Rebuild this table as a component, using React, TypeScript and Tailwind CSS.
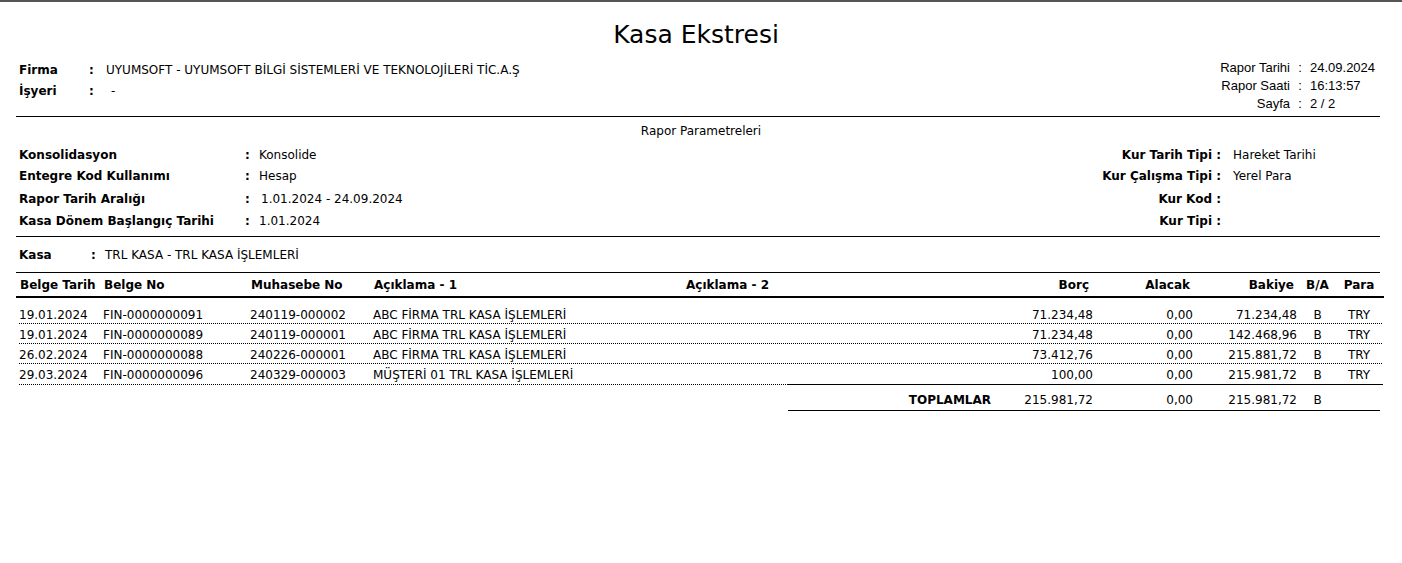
import React from "react";

type Row = {
  tarih: string;
  belgeNo: string;
  muhasebeNo: string;
  aciklama1: string;
  aciklama2: string;
  borc: string;
  alacak: string;
  bakiye: string;
  ba: string;
  para: string;
};

const rows: Row[] = [
  {
    tarih: "19.01.2024",
    belgeNo: "FIN-0000000091",
    muhasebeNo: "240119-000002",
    aciklama1: "ABC FİRMA TRL KASA İŞLEMLERİ",
    aciklama2: "",
    borc: "71.234,48",
    alacak: "0,00",
    bakiye: "71.234,48",
    ba: "B",
    para: "TRY",
  },
  {
    tarih: "19.01.2024",
    belgeNo: "FIN-0000000089",
    muhasebeNo: "240119-000001",
    aciklama1: "ABC FİRMA TRL KASA İŞLEMLERİ",
    aciklama2: "",
    borc: "71.234,48",
    alacak: "0,00",
    bakiye: "142.468,96",
    ba: "B",
    para: "TRY",
  },
  {
    tarih: "26.02.2024",
    belgeNo: "FIN-0000000088",
    muhasebeNo: "240226-000001",
    aciklama1: "ABC FİRMA TRL KASA İŞLEMLERİ",
    aciklama2: "",
    borc: "73.412,76",
    alacak: "0,00",
    bakiye: "215.881,72",
    ba: "B",
    para: "TRY",
  },
  {
    tarih: "29.03.2024",
    belgeNo: "FIN-0000000096",
    muhasebeNo: "240329-000003",
    aciklama1: "MÜŞTERİ 01 TRL KASA İŞLEMLERİ",
    aciklama2: "",
    borc: "100,00",
    alacak: "0,00",
    bakiye: "215.981,72",
    ba: "B",
    para: "TRY",
  },
];

const leftParams = [
  { label: "Konsolidasyon", value: "Konsolide", h: "h-[20px]", pad: "" },
  { label: "Entegre Kod Kullanımı", value: "Hesap", h: "h-[22px]", pad: "" },
  { label: "Rapor Tarih Aralığı", value: "1.01.2024 - 24.09.2024", h: "h-[23px]", pad: "pl-[2px]" },
  { label: "Kasa Dönem Başlangıç Tarihi", value: "1.01.2024", h: "h-[22px]", pad: "" },
];

const rightParams = [
  { label: "Kur Tarih Tipi :", value: "Hareket Tarihi" },
  { label: "Kur Çalışma Tipi :", value: "Yerel Para" },
  { label: "Kur Kod :", value: "" },
  { label: "Kur Tipi :", value: "" },
];

function Cells({ r }: { r: Row }) {
  return (
    <>
      <div className="w-[84px] shrink-0">{r.tarih}</div>
      <div className="w-[147px] shrink-0">{r.belgeNo}</div>
      <div className="w-[123px] shrink-0">{r.muhasebeNo}</div>
      <div className="w-[313px] shrink-0">{r.aciklama1}</div>
      <div className="w-[314px] shrink-0">{r.aciklama2}</div>
      <div className="w-[93px] shrink-0 text-right">{r.borc}</div>
      <div className="w-[100px] shrink-0 text-right">{r.alacak}</div>
      <div className="w-[104px] shrink-0 text-right">{r.bakiye}</div>
      <div className="w-[41px] shrink-0 text-center">{r.ba}</div>
      <div className="w-[42px] shrink-0 text-center">{r.para}</div>
    </>
  );
}

export default function App() {
  return (
    <div className="w-[1402px] h-[563px] bg-white border-t-2 border-[#555] text-black font-['DejaVu_Sans',sans-serif] text-[12px] whitespace-nowrap">
      <div className="ml-[16px] w-[1364px]">
        {/* Title */}
        <div className="pt-[17px] h-[48px] text-center text-[25px] leading-[32px] pr-[4px]">
          Kasa Ekstresi
        </div>

        {/* Firma / Rapor info */}
        <div className="mt-[8px] h-[59px] flex justify-between items-start border-b border-black">
          <div className="pl-[3px] pt-[1px]">
            <div className="flex h-[21px] items-center">
              <span className="w-[70px] font-bold">Firma</span>
              <span className="w-[17px] font-bold">:</span>
              <span>UYUMSOFT - UYUMSOFT BİLGİ SİSTEMLERİ VE TEKNOLOJİLERİ TİC.A.Ş</span>
            </div>
            <div className="flex h-[21px] items-center">
              <span className="w-[70px] font-bold">İşyeri</span>
              <span className="w-[17px] font-bold">:</span>
              <span className="pl-[5px]">-</span>
            </div>
          </div>
          <div className="pt-[1px] font-['Liberation_Sans',sans-serif] text-[13px]">
            {[
              ["Rapor Tarihi", "24.09.2024"],
              ["Rapor Saati", "16:13:57"],
              ["Sayfa", "2 / 2"],
            ].map(([k, v]) => (
              <div key={k} className="flex h-[18px] items-center">
                <span className="w-[78px] text-right">{k}</span>
                <span className="w-[20px] text-center">:</span>
                <span className="w-[70px]">{v}</span>
              </div>
            ))}
          </div>
        </div>

        {/* Rapor parametreleri */}
        <div className="border-b border-black pb-[4px]">
          <div className="h-[28px] flex items-center justify-center pl-[6px]">
            Rapor Parametreleri
          </div>
          {leftParams.map((p, i) => (
            <div key={p.label} className={`${p.h} flex items-center justify-between`}>
              <div className="flex items-center pl-[3px]">
                <span className="w-[226px] font-bold">{p.label}</span>
                <span className="w-[14px] font-bold">:</span>
                <span className={p.pad}>{p.value}</span>
              </div>
              <div className="flex items-center">
                <span className="font-bold text-right">{rightParams[i].label}</span>
                <span className="w-[159px] pl-[12px]">{rightParams[i].value}</span>
              </div>
            </div>
          ))}
        </div>

        {/* Kasa */}
        <div className="h-[36px] flex items-center pl-[3px] border-b border-black">
          <span className="w-[72px] font-bold">Kasa</span>
          <span className="w-[14px] font-bold">:</span>
          <span>TRL KASA - TRL KASA İŞLEMLERİ</span>
        </div>
      </div>

      {/* Table */}
      <div className="ml-[16px] w-[1368px]">
        <div className="h-[25px] flex items-center pl-[3px] font-bold border-b-[2px] border-black">
          <div className="w-[84px] shrink-0 pl-[1px]">Belge Tarih</div>
          <div className="w-[147px] shrink-0 pl-[1px]">Belge No</div>
          <div className="w-[123px] shrink-0 pl-[1px]">Muhasebe No</div>
          <div className="w-[313px] shrink-0 pl-[1px]">Açıklama - 1</div>
          <div className="w-[314px] shrink-0">Açıklama - 2</div>
          <div className="w-[93px] shrink-0 text-right pr-[4px]">Borç</div>
          <div className="w-[100px] shrink-0 text-right pr-[3px]">Alacak</div>
          <div className="w-[104px] shrink-0 text-right pr-[3px]">Bakiye</div>
          <div className="w-[41px] shrink-0 text-center">B/A</div>
          <div className="w-[42px] shrink-0 text-center">Para</div>
        </div>

        <div className="pt-[6px] ml-[3px] w-[1363px]">
          {rows.map((r, i) => (
            <div
              key={r.belgeNo}
              className={`h-[20px] flex items-center pt-[2px] ${
                i < rows.length - 1 ? "border-b border-dotted border-black" : ""
              }`}
            >
              <Cells r={r} />
            </div>
          ))}
          <div className="flex h-[1px]">
            <div className="w-[769px] border-b border-dotted border-black" />
            <div className="w-[592px] border-b border-black" />
            <div className="flex-1 border-b border-dotted border-black" />
          </div>
        </div>

        {/* Totals */}
        <div className="ml-[772px] w-[592px] h-[26px] pt-[4px] flex items-center border-b border-black">
          <div className="w-[203px] shrink-0 text-right font-bold">TOPLAMLAR</div>
          <div className="w-[102px] shrink-0 text-right">215.981,72</div>
          <div className="w-[100px] shrink-0 text-right">0,00</div>
          <div className="w-[104px] shrink-0 text-right">215.981,72</div>
          <div className="w-[41px] shrink-0 text-center">B</div>
        </div>
      </div>
    </div>
  );
}
